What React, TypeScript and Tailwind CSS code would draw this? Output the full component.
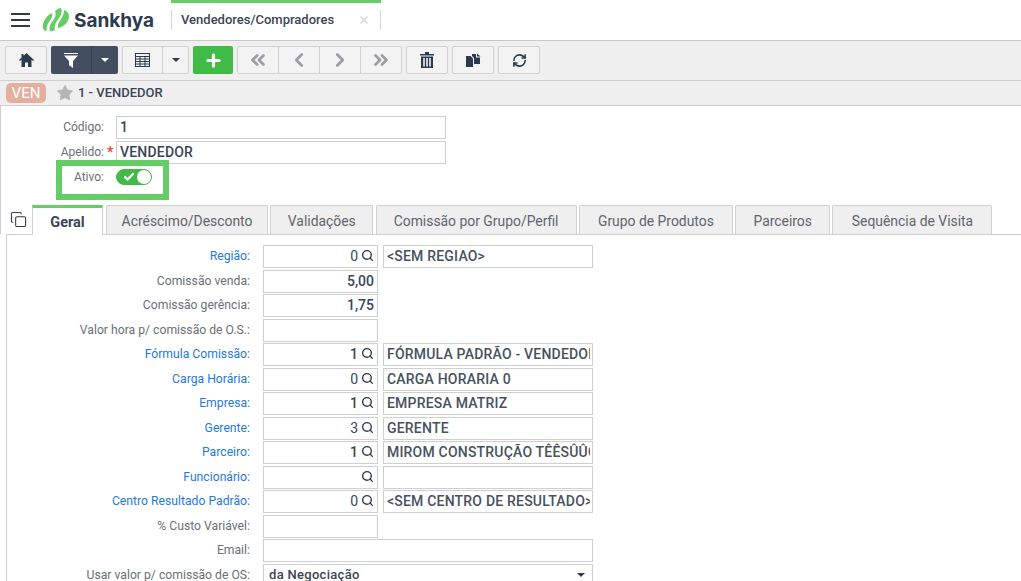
import React from "react";
import { Search, Plus, ChevronLeft, ChevronRight, ChevronsLeft, ChevronsRight, Star, RefreshCw, Check, X, Copy } from "lucide-react";

const font = "font-['Roboto','Liberation_Sans',sans-serif]";

const Caret = ({ className }: { className: string }) => (
  <span className={"w-0 h-0 border-x-[4px] border-x-transparent border-t-[4px] " + className} />
);

const ToolBtn = ({ className = "", children }: { className?: string; children: React.ReactNode }) => (
  <button className={"h-[28px] flex items-center justify-center border border-[#d0d0d0] rounded-[2px] bg-[#f3f3f3] text-[#2b3a4e] " + className}>
    {children}
  </button>
);

const Logo = () => (
  <svg width="27" height="24" viewBox="0 0 27 24" fill="#66cc66">
    <path d="M1 20C0 14 4 8 10 5C11 9 9 11 7 14C5 17 4 20 5 23C3 23 1 22 1 20Z" />
    <path d="M8 23C6 18 10 14 12 11C14 8 14 5 13 3C15 1 17 0 19 0C21 5 18 9 15 13C13 16 12 19 13 22C11 23 9 24 8 23Z" />
    <path d="M16 20C15 17 17 14 19 11C21 8 22 5 22 2C25 3 27 5 27 8C27 14 22 19 16 20Z" />
  </svg>
);

const TABS: [string, string][] = [
  ["Acréscimo/Desconto", "w-[162px]"],
  ["Validações", "w-[103px]"],
  ["Comissão por Grupo/Perfil", "w-[201px]"],
  ["Grupo de Produtos", "w-[154px]"],
  ["Parceiros", "w-[95px]"],
  ["Sequência de Visita", "w-[160px]"],
];

type Row = {
  label: string;
  link?: boolean;
  value?: string;
  search?: boolean;
  desc?: string;
  hasDesc?: boolean;
  wide?: boolean;
  bold?: boolean;
};

const ROWS: Row[] = [
  { label: "Região:", link: true, value: "0", search: true, desc: "<SEM REGIAO>", hasDesc: true },
  { label: "Comissão venda:", value: "5,00", bold: true },
  { label: "Comissão gerência:", value: "1,75", bold: true },
  { label: "Valor hora p/ comissão de O.S.:" },
  { label: "Fórmula Comissão:", link: true, value: "1", search: true, desc: "FÓRMULA PADRÃO - VENDEDOR", hasDesc: true, bold: true },
  { label: "Carga Horária:", link: true, value: "0", search: true, desc: "CARGA HORARIA 0", hasDesc: true },
  { label: "Empresa:", link: true, value: "1", search: true, desc: "EMPRESA MATRIZ", hasDesc: true, bold: true },
  { label: "Gerente:", link: true, value: "3", search: true, desc: "GERENTE", hasDesc: true },
  { label: "Parceiro:", link: true, value: "1", search: true, desc: "MIROM CONSTRUÇÃO TÊÊSÛÛÇÃO", hasDesc: true, bold: true },
  { label: "Funcionário:", link: true, search: true, hasDesc: true },
  { label: "Centro Resultado Padrão:", link: true, value: "0", search: true, desc: "<SEM CENTRO DE RESULTADO>", hasDesc: true },
  { label: "% Custo Variável:" },
  { label: "Email:", wide: true },
];

const box = "h-[23px] border border-[#cfcfcf] bg-white";

const FormRow = ({ row }: { row: Row }) => (
  <div className="flex h-[24.5px] items-start">
    <span className={"w-[243px] pt-[4px] text-right text-[12.2px] leading-[15px] " + (row.link ? "text-[#1f7ae0]" : "text-[#6a7078]")}>
      {row.label}
    </span>
    {row.wide ? (
      <div className={"ml-[13px] w-[330px] " + box} />
    ) : (
      <div className={"ml-[13px] w-[115px] flex items-center justify-end pr-[3px] text-[14px] text-[#3a4656] " + box + (row.bold ? " font-medium" : "")}>
        <span>{row.value}</span>
        {row.search && <Search size={13} strokeWidth={2.5} className="ml-[3px] mb-[2px] text-[#2b3a4e]" />}
      </div>
    )}
    {row.hasDesc && (
      <div className={"ml-[5px] w-[210px] pl-[3px] pr-[2px] " + box}>
        <div className="overflow-hidden whitespace-nowrap text-[14px] leading-[21px] font-medium tracking-[0.2px] text-[#47525f]">
          {row.desc}
        </div>
      </div>
    )}
  </div>
);

export default function App() {
  return (
    <div className={"relative h-[581px] w-[1021px] overflow-hidden bg-white " + font}>
      {/* top bar */}
      <header className="flex h-[41px] items-center border-b border-[#c8c8c8] bg-white">
        <div className="ml-[11px] flex w-[19px] flex-col gap-[4px]">
          <span className="h-[2px] bg-[#2b3a4e]" />
          <span className="h-[2px] bg-[#2b3a4e]" />
          <span className="h-[2px] bg-[#2b3a4e]" />
        </div>
        <div className="ml-[12px]"><Logo /></div>
        <span className="ml-[5px] w-[97px] font-['Inter'] text-[19px] font-bold leading-none text-[#2b3a4e]">Sankhya</span>
        <div className="flex h-[41px] w-[210px] flex-col">
          <div className="h-[3px] bg-[#66cc66]" />
          <div className="mt-[7px] flex h-[20px] items-center justify-between border-x border-[#d6d6d6] pl-[9px] pr-[10px]">
            <span className="text-[13px] font-medium text-[#3a4656]">Vendedores/Compradores</span>
            <X size={12} strokeWidth={3} className="text-[#d8d8d8]" />
          </div>
        </div>
      </header>

      {/* toolbar */}
      <div className="flex h-[40px] items-center border-b border-[#cfcfcf] bg-[#f0efef] pl-[5px] pb-[1px]">
        <ToolBtn className="w-[42px]">
          <svg width="15" height="14" viewBox="0 0 15 14" fill="#2b3a4e">
            <path d="M7.5 0L15 7L14 8L12.5 6.8V14H9V9.5H6V14H2.5V6.8L1 8L0 7L2.5 4.7V1H4.5V2.8Z" />
          </svg>
        </ToolBtn>
        <div className="ml-[4px] flex h-[28px] w-[67px] rounded-[2px] bg-[#434f60]">
          <div className="flex w-[41px] items-center justify-center border-r border-[#36404e]">
            <svg width="14" height="15" viewBox="0 0 14 15" fill="#fff">
              <path d="M0 0H14V1H0Z" />
              <path d="M0 2.5H14L9 8V15L5 12V8Z" />
            </svg>
          </div>
          <div className="flex flex-1 items-center justify-center"><Caret className="border-t-white" /></div>
        </div>
        <div className="ml-[4px] flex h-[28px] w-[67px] rounded-[2px] border border-[#d0d0d0] bg-[#f3f3f3]">
          <div className="flex w-[40px] items-center justify-center border-r border-[#d0d0d0]">
            <svg width="15" height="14" viewBox="0 0 15 14" fill="none" stroke="#2b3a4e">
              <rect x="0.5" y="0.5" width="14" height="13" />
              <path d="M1 3.5H14M1 6H14M1 8.5H14M1 11H14M5 3V13M10 3V13" strokeWidth="1" />
            </svg>
          </div>
          <div className="flex flex-1 items-center justify-center"><Caret className="border-t-[#2b3a4e]" /></div>
        </div>
        <button className="ml-[4px] flex h-[28px] w-[40px] items-center justify-center rounded-[2px] bg-[#40bb48] text-white">
          <Plus size={19} strokeWidth={4} />
        </button>
        <div className="ml-[4px] flex h-[28px] rounded-[2px] border border-[#d0d0d0] bg-[#f3f3f3] text-[#9a9da2]">
          <div className="flex w-[41px] items-center justify-center border-r border-[#d0d0d0]"><ChevronsLeft size={22} strokeWidth={3} /></div>
          <div className="flex w-[41px] items-center justify-center border-r border-[#d0d0d0]"><ChevronLeft size={22} strokeWidth={3} /></div>
          <div className="flex w-[41px] items-center justify-center border-r border-[#d0d0d0]"><ChevronRight size={22} strokeWidth={3} /></div>
          <div className="flex w-[40px] items-center justify-center"><ChevronsRight size={22} strokeWidth={3} /></div>
        </div>
        <ToolBtn className="ml-[4px] w-[42px]">
          <svg width="14" height="16" viewBox="0 0 14 16" fill="#2b3a4e">
            <path d="M0 2H5V0H9V2H14V3.5H0ZM1 4.5H13V16H1ZM3.2 6V14.5H4.8V6ZM6.2 6V14.5H7.8V6ZM9.2 6V14.5H10.8V6Z" fillRule="evenodd" />
          </svg>
        </ToolBtn>
        <ToolBtn className="ml-[4px] w-[42px]">
          <svg width="15" height="14" viewBox="0 0 15 14" fill="#2b3a4e">
            <path d="M0 3H4.5L7 5.5V14H0Z" />
            <path d="M6 1H10V4.5H14V11H8V5L6 3Z" />
            <path d="M11 0.5L14.5 3.5H11Z" />
          </svg>
        </ToolBtn>
        <ToolBtn className="ml-[4px] w-[42px]"><RefreshCw size={15} strokeWidth={2.5} /></ToolBtn>
      </div>

      {/* record title */}
      <div className="flex h-[25px] items-center border-b border-[#cfcfcf] bg-[#f0efef] pl-[6px]">
        <span className="flex h-[20px] w-[40px] items-center justify-center rounded-[5px] bg-[#e3b0a0] text-[15px] text-white">VEN</span>
        <Star size={18} fill="#b5b5b8" strokeWidth={1} className="ml-[10px] text-[#b5b5b8]" />
        <span className="ml-[4px] text-[13px] font-medium text-[#3a4656]">1 - VENDEDOR</span>
      </div>

      {/* header fields */}
      <div className="border-l border-[#cfcfcf] pt-[10px]">
        <div className="flex h-[25px] items-start">
          <span className="w-[103px] pt-[4px] text-right text-[12px] leading-[15px] text-[#6a7078]">Código:</span>
          <div className="ml-[12px] h-[23px] w-[330px] border border-[#cfcfcf] px-[3px] text-[14px] font-medium leading-[21px] text-[#3a4656]">1</div>
        </div>
        <div className="flex h-[25px] items-start">
          <span className="w-[103px] pt-[4px] text-right text-[12px] leading-[15px] text-[#6a7078]">Apelido:</span>
          <span className="w-[12px] pl-[3px] text-[14px] font-bold leading-[22px] text-[#e8502a]">*</span>
          <div className="h-[23px] w-[330px] border border-[#cfcfcf] px-[3px] text-[14px] font-medium leading-[21px] tracking-[0.2px] text-[#3a4656]">VENDEDOR</div>
        </div>
        <div className="flex h-[29px] items-start pt-[3px]">
          <span className="w-[103px] pt-[1px] text-right text-[12px] leading-[15px] text-[#6a7078]">Ativo:</span>
          <div className="ml-[12px] flex h-[16px] w-[36px] items-center justify-between rounded-full border border-[#40bb48] bg-[#40bb48] pl-[6px]">
            <Check size={12} strokeWidth={4.5} className="text-white" />
            <span className="h-[14px] w-[14px] rounded-full bg-white" />
          </div>
        </div>

        {/* tabs */}
        <div className="mt-[9px] flex h-[30px] items-end">
          <Copy size={17} strokeWidth={1.5} className="ml-[9px] mb-[6px] text-[#2b3a4e]" />
          <div className="relative z-10 ml-[5px] -mb-px flex h-[30px] w-[71px] items-center justify-center border-x border-t-[3px] border-[#66cc66] border-x-[#d0d0d0] bg-white pt-[2px] text-[14.5px] font-bold text-[#3a4656]">
            Geral
          </div>
          <div className="ml-[3px] flex items-end gap-[2.3px]">
            {TABS.map(([t, w]) => (
              <div key={t} className={"flex h-[29px] items-center justify-center rounded-t-[2px] border border-b-0 border-[#d0d0d0] bg-[#f0efef] pt-[3px] text-[13.9px] text-[#5d6570] " + w}>
                {t}
              </div>
            ))}
          </div>
        </div>
      </div>

      {/* panel */}
      <div className="ml-[6px] h-[349px] border-l border-t border-[#d0d0d0] pt-[10px]">
        <div>
          {ROWS.map((r) => (
            <FormRow key={r.label} row={r} />
          ))}
          <div className="flex h-[24.5px] items-start">
            <span className="w-[243px] pt-[4px] text-right text-[12.2px] leading-[15px] text-[#6a7078]">Usar valor p/ comissão de OS:</span>
            <div className={"ml-[13px] flex w-[330px] items-center justify-between pl-[5px] pr-[7px] text-[13px] font-medium text-[#3a4656] " + box}>
              <span className="tracking-[0.3px]">da Negociação</span>
              <Caret className="border-t-[#2b3a4e]" />
            </div>
          </div>
        </div>
      </div>

      {/* highlight annotation */}
      <div className="absolute left-[56px] top-[160px] h-[40px] w-[113px] border-[6px] border-[#66cc66]" />
    </div>
  );
}
